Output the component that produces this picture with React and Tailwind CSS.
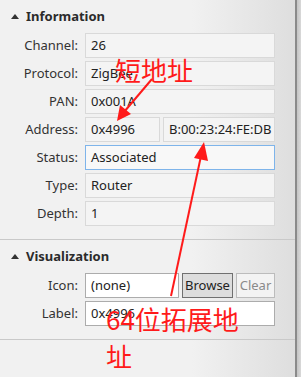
const UI = { fontFamily: '"Noto Sans", "Liberation Sans", sans-serif' }
const CJK = { fontFamily: '"Noto Sans CJK SC", "Noto Sans", sans-serif' }

function SectionHeader({ title }) {
  return (
    <div className="flex items-center h-[33px] pl-[11px] gap-[7px]">
      <svg width="8" height="5" viewBox="0 0 8 5" aria-hidden="true">
        <polygon points="4,0 8,5 0,5" fill="#333" />
      </svg>
      <span className="text-[13px] font-bold text-[#2b2b2b] leading-none">{title}</span>
    </div>
  )
}

function Row({ label, children }) {
  return (
    <div className="flex items-center h-[25px] gap-[7px]">
      <span className="w-[78px] text-right text-[13px] text-[#333] leading-none">{label}</span>
      <div className="flex gap-[3px] w-[190px] h-full">{children}</div>
    </div>
  )
}

// read-only field (grey), editable field (white) and the focused one (blue border)
function Field({ value, kind = 'ro', className = '' }) {
  const look = {
    ro: 'bg-[#f4f4f4] border-[#d9d9d9]',
    edit: 'bg-white border-[#acacac]',
    focus: 'bg-[#f8f8f8] border-[#7eb4ea]',
  }[kind]
  return (
    <div className={`flex items-center h-full border pl-[5px] overflow-hidden whitespace-nowrap text-[13px] text-[#222] ${look} ${className}`}>
      {value}
    </div>
  )
}

export default function App() {
  return (
    <div className="relative flex w-[301px] h-[377px] overflow-hidden" style={UI}>
      <div className="w-[295px] h-full bg-[linear-gradient(to_right,#f1f1f1_65%,#dedede)]">

        {/* ── Information ── */}
        <section className="pb-[13px] border-b border-[#c9c9c9]">
          <SectionHeader title="Information" />
          <div className="flex flex-col gap-[3px]">
            <Row label="Channel:"><Field value="26" className="flex-1" /></Row>
            <Row label="Protocol:"><Field value="ZigBee" className="flex-1" /></Row>
            <Row label="PAN:"><Field value="0x001A" className="flex-1" /></Row>
            <Row label="Address:">
              <Field value="0x4996" className="w-[75px]" />
              <Field value="B:00:23:24:FE:DB" className="flex-1 pl-[3px]" />
            </Row>
            <Row label="Status:"><Field value="Associated" kind="focus" className="flex-1" /></Row>
            <Row label="Type:"><Field value="Router" className="flex-1" /></Row>
            <Row label="Depth:"><Field value="1" className="flex-1" /></Row>
          </div>
        </section>

        {/* ── Visualization ── */}
        <section className="pb-[13px] border-b border-[#c9c9c9]">
          <SectionHeader title="Visualization" />
          <div className="flex flex-col gap-[3px]">
            <Row label="Icon:">
              <Field value="(none)" kind="edit" className="w-[94px]" />
              <button className="w-[51px] h-full border border-[#707070] bg-[#dddddd] text-[13px] text-[#222]">Browse</button>
              <button className="flex-1 h-full border border-[#bcbcbc] bg-[#f3f3f3] text-[13px] text-[#8a8a8a]">Clear</button>
            </Row>
            <Row label="Label:"><Field value="0x4996" kind="edit" className="flex-1" /></Row>
          </div>
        </section>
      </div>

      {/* scroll edge */}
      <div className="w-[2px] h-full bg-[#8a8a8a]" />
      <div className="flex-1 h-full bg-[linear-gradient(to_right,#c4c4c4,#d9d9d9)]" />

      {/* ── red annotations ── */}
      <div className="absolute left-[115px] top-[57px] text-[26px] leading-none text-[#ff1a1a]" style={CJK}>短地址</div>
      <div className="absolute left-[106px] top-[300px] text-[26px] leading-[37px] text-[#ff1a1a]" style={CJK}>
        64位拓展地<br />址
      </div>
      <svg className="absolute left-0 top-0 pointer-events-none" width="301" height="377" aria-hidden="true">
        <line x1="152" y1="79" x2="124" y2="112" stroke="#ff1a1a" strokeWidth="2" />
        <polygon points="117,121 120,105 131,114" fill="#ff1a1a" />
        <line x1="171" y1="296" x2="201" y2="156" stroke="#ff1a1a" strokeWidth="2" />
        <polygon points="204,142 208,161 194,158" fill="#ff1a1a" />
      </svg>
    </div>
  )
}
